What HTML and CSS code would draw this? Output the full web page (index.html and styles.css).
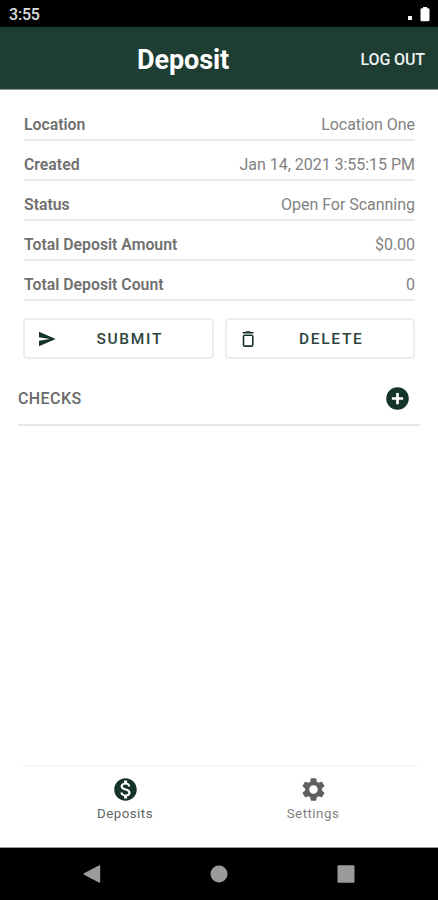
FILE: index.html
```html
<!DOCTYPE html>
<html lang="en">
<head>
<meta charset="utf-8">
<title>Deposit</title>
<link rel="stylesheet" href="styles.css">
</head>
<body>
<div class="status-bar">
  <span class="clock">3:55</span>
  <span class="signal"></span>
  <svg class="battery" viewBox="0 0 10 16"><path d="M3 1h4v1.300h1.200q1.300 0 1.300 1.300v10.400q0 1.300-1.300 1.300h-6.400q-1.300 0-1.300-1.300v-10.400q0-1.300 1.300-1.300H3z"/></svg>
</div>
<header class="app-bar">
  <h1 class="title">Deposit</h1>
  <span class="logout">LOG OUT</span>
</header>
<main class="content">
  <dl class="details">
    <div class="row"><dt>Location</dt><dd>Location One</dd></div>
    <div class="row"><dt>Created</dt><dd>Jan 14, 2021 3:55:15 PM</dd></div>
    <div class="row"><dt>Status</dt><dd>Open For Scanning</dd></div>
    <div class="row"><dt>Total Deposit Amount</dt><dd>$0.00</dd></div>
    <div class="row"><dt>Total Deposit Count</dt><dd>0</dd></div>
  </dl>
  <div class="actions">
    <button class="action">
      <svg class="action-icon" viewBox="0 0 20 20"><path d="M2 2.700L18.700 10 2 17.300V11.700L13 10 2 8.300z"/></svg>
      <span class="action-label">SUBMIT</span>
    </button>
    <button class="action">
      <svg class="action-icon" viewBox="0 0 20 20"><path d="M3.700 3.700H14.500M6.800 2.900H11.400" fill="none" stroke="currentColor" stroke-width="1.400"/><rect x="4.500" y="6.300" width="9.300" height="10.800" rx="1.400" fill="none" stroke="currentColor" stroke-width="1.600"/></svg>
      <span class="action-label">DELETE</span>
    </button>
  </div>
  <section class="checks">
    <h2>CHECKS</h2>
    <svg class="icon" viewBox="0 0 24 24"><circle cx="12" cy="12" r="10"/><path class="plus" d="M12 7v10M7 12h10"/></svg>
  </section>
</main>
<nav class="tabs">
  <div class="tab active">
    <svg class="icon" viewBox="0 0 24 24"><path d="M12 2C6.480 2 2 6.480 2 12s4.480 10 10 10 10-4.480 10-10S17.520 2 12 2zm1.410 16.090V20h-2.670v-1.930c-1.710-.36-3.160-1.460-3.270-3.400h1.960c.1 1.050.82 1.870 2.650 1.870 1.960 0 2.400-.98 2.400-1.590 0-.83-.44-1.610-2.670-2.140-2.480-.6-4.180-1.620-4.180-3.670 0-1.720 1.390-2.840 3.110-3.210V4h2.670v1.950c1.860.45 2.790 1.860 2.850 3.390H14.300c-.05-1.110-.64-1.870-2.220-1.870-1.500 0-2.400.68-2.400 1.640 0 .84.65 1.390 2.670 1.910s4.180 1.390 4.180 3.910c-.01 1.830-1.380 2.830-3.120 3.160z"/></svg>
    <span>Deposits</span>
  </div>
  <div class="tab">
    <svg class="icon" viewBox="0 0 24 24"><path d="M19.430 12.980c.04-.32.070-.64.070-.98s-.03-.66-.07-.98l2.110-1.650c.19-.15.240-.42.120-.64l-2-3.460c-.12-.22-.39-.3-.61-.22l-2.490 1c-.52-.4-1.080-.73-1.690-.98l-.38-2.650C14.460 2.180 14.250 2 14 2h-4c-.25 0-.46.180-.49.420l-.38 2.650c-.61.250-1.170.590-1.690.980l-2.490-1c-.23-.09-.49 0-.61.220l-2 3.460c-.13.220-.07.490.12.640l2.110 1.650c-.04.320-.07.650-.07.980s.03.660.07.980l-2.110 1.650c-.19.150-.24.420-.12.640l2 3.460c.12.220.39.300.61.220l2.490-1c.52.400 1.080.730 1.690.980l.38 2.650c.03.240.24.420.49.420h4c.25 0 .46-.18.490-.42l.38-2.650c.61-.25 1.170-.59 1.690-.98l2.490 1c.23.090.49 0 .61-.22l2-3.460c.12-.22.070-.49-.12-.64l-2.110-1.650zM12 15.800c-2.090 0-3.800-1.710-3.800-3.800s1.710-3.800 3.800-3.800 3.800 1.710 3.800 3.800-1.710 3.800-3.800 3.800z"/></svg>
    <span>Settings</span>
  </div>
</nav>
<footer class="system-nav">
  <svg viewBox="0 0 18 18"><path d="M16.300.2q.9-.2.900.8v16q0 1-.9.700L1 9.700q-1-.7 0-1.400z"/></svg>
  <svg viewBox="0 0 18 18"><circle cx="9" cy="9" r="8.500"/></svg>
  <svg viewBox="0 0 18 18"><rect x=".5" y=".3" width="17" height="17.500" rx="1"/></svg>
</footer>
</body>
</html>
```

FILE: styles.css
```css
* { box-sizing: border-box; }
body {
  margin: 0;
  width: 438px;
  height: 900px;
  display: flex;
  flex-direction: column;
  overflow: hidden;
  background: #fff;
  color: #666;
  font-family: Roboto, sans-serif;
}
h1, h2, dl, dt, dd { margin: 0; }
svg { display: block; fill: currentColor; flex: none; }

.status-bar {
  height: 27px;
  padding: 2px 8px 0 9px;
  display: flex;
  align-items: center;
  background: #000;
  color: #fff;
}
.clock { font-size: 16px; font-weight: 500; letter-spacing: -.2px; color: #dedede; }
.signal { width: 4px; height: 4px; margin: 7px 8px 0 auto; background: #f4f4f4; }
.battery { width: 10px; height: 16px; margin-top: -2px; }

.app-bar {
  height: 63px;
  padding: 0 13px;
  display: grid;
  grid-template-columns: 340px 1fr;
  align-items: center;
  background: #1e3e34;
  border-bottom: 1px solid #879690;
  color: #fff;
}
.title { padding-top: 3px; text-align: center; font-size: 27px; font-weight: 700; line-height: 32px; letter-spacing: -.1px; }
.logout { justify-self: end; padding-top: 2px; font-size: 16px; font-weight: 500; letter-spacing: -.1px; white-space: nowrap; color: #eef2f0; }

.content { flex: 1; padding: 11px 18px 0; }
.details { padding: 0 5px 0 6px; }
.row {
  height: 40px;
  padding-top: 8px;
  display: flex;
  justify-content: space-between;
  align-items: center;
  border-bottom: 2px solid #ebebeb;
  font-size: 16px;
}
.row dt { font-weight: 600; font-size: 15.800px; color: #707070; }
.row dd { color: #828282; letter-spacing: -.03px; }

.actions { display: grid; grid-template-columns: 1fr 1fr; gap: 11px; padding: 17px 5px 0 5px; }
.action {
  height: 41px;
  display: flex;
  align-items: center;
  padding: 0 13px 0 12px;
  border: 2px solid #eee;
  border-radius: 4px;
  background: #fff;
  color: #15332a;
  font: 500 15.500px Roboto, sans-serif;
  letter-spacing: 1.700px;
}
.action-icon { width: 20px; height: 20px; }
.action-label { flex: 1; padding: 1px 0 0 4px; text-align: center; color: #2b443c; }

.checks {
  height: 67px;
  padding: 13px 9px 0 0;
  display: flex;
  justify-content: space-between;
  align-items: center;
  border-bottom: 2px solid #e6e6e6;
}
.checks h2 { padding-top: 1px; font-size: 16px; font-weight: 500; letter-spacing: .4px; color: #6a6a6a; }
.icon { width: 27px; height: 27px; }
.checks .icon { color: #15332a; }
.plus { stroke: #fff; stroke-width: 2.400; }

.tabs {
  height: 82px;
  margin: 0 20px;
  padding: 0 11px;
  display: grid;
  grid-template-columns: 1fr 1fr;
  border-top: 1px solid #f3f3f3;
}
.tab {
  display: flex;
  flex-direction: column;
  align-items: center;
  padding-top: 10px;
  gap: 2px;
  font-size: 13.300px;
  line-height: 17px;
  letter-spacing: .5px;
  color: #808080;
}
.tab .icon { color: #606060; }
.tab.active { color: #5c6763; }
.tab.active .icon { color: #15332a; }

.system-nav {
  height: 53px;
  padding: 0 83px;
  display: flex;
  justify-content: space-between;
  align-items: center;
  border-top: 1px solid #999;
  background: #000;
  color: #9b9b9b;
}
.system-nav svg { width: 18px; height: 18px; }
```
